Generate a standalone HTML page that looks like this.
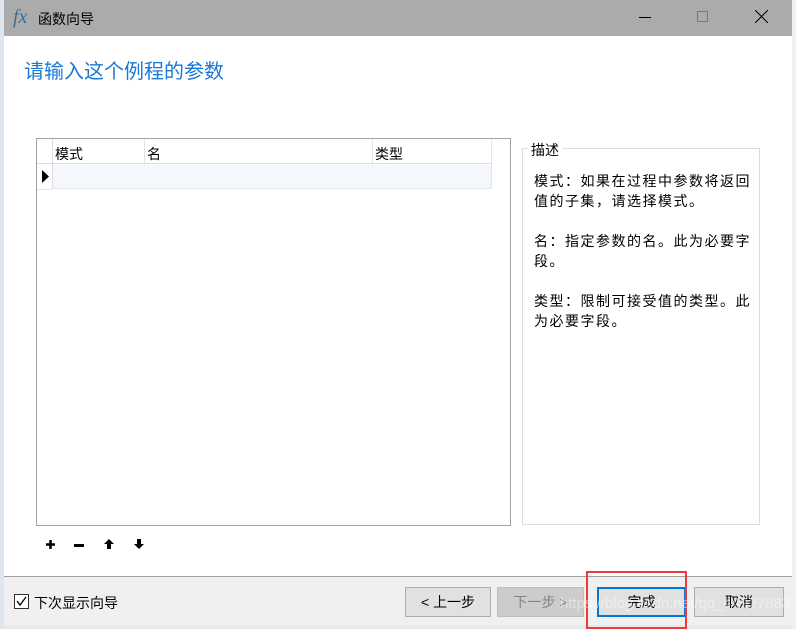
<!DOCTYPE html>
<html><head><meta charset="utf-8"><style>
*{margin:0;padding:0;box-sizing:border-box}
body{width:796px;height:629px;position:relative;background:#fff;font-family:"Liberation Sans","Noto Sans CJK SC",sans-serif;font-size:14px;color:#000;overflow:hidden}
.a{position:absolute}
.btn{position:absolute;top:587px;height:30px;border:1px solid #adadad;background:#e1e1e1;text-align:center;line-height:28px;font-size:14px}
</style></head><body>
<div class="a" style="left:0;top:0;width:4px;height:629px;background:#dfe6ee"></div>
<div class="a" style="left:792px;top:0;width:4px;height:629px;background:#eef0f3"></div>
<div class="a" style="left:4px;top:0;width:788px;height:36px;background:#ababab"></div>
<div class="a" style="left:13px;top:6px;font-family:'Liberation Serif',serif;font-style:italic;font-size:20px;color:#3d6e94">fx</div>
<div class="a" style="left:38px;top:9px;font-size:14px">函数向导</div>
<div class="a" style="left:639px;top:17px;width:12px;height:1px;background:#000"></div>
<div class="a" style="left:697px;top:11px;width:11px;height:11px;border:1px solid #777"></div>
<svg class="a" style="left:755px;top:10px" width="13" height="13"><path d="M0 0L13 13M13 0L0 13" stroke="#000" stroke-width="1"/></svg>
<div class="a" style="left:24px;top:55px;font-size:20px;color:#1a78d6">请输入这个例程的参数</div>
<div class="a" style="left:36px;top:138px;width:475px;height:388px;border:1px solid #a0a0a0;background:#fff"></div>
<div class="a" style="left:37px;top:139px;width:455px;height:25px;border-bottom:1px solid #ddd"></div>
<div class="a" style="left:52px;top:139px;width:1px;height:50px;background:#ddd"></div>
<div class="a" style="left:144px;top:139px;width:1px;height:50px;background:#e5e5e5"></div>
<div class="a" style="left:372px;top:139px;width:1px;height:50px;background:#e5e5e5"></div>
<div class="a" style="left:491px;top:139px;width:1px;height:50px;background:#e5e5e5"></div>
<div class="a" style="left:53px;top:165px;width:438px;height:24px;background:#f4f8fc;border-bottom:1px solid #e5e5e5"></div>
<div class="a" style="left:37px;top:189px;width:15px;height:1px;background:#e5e5e5"></div>
<div class="a" style="left:55px;top:144px">模式</div>
<div class="a" style="left:147px;top:144px">名</div>
<div class="a" style="left:375px;top:144px">类型</div>
<svg class="a" style="left:42px;top:170px" width="8" height="13"><path d="M0 0L7 6.5L0 13Z" fill="#000"/></svg>
<div class="a" style="left:522px;top:148px;width:238px;height:377px;border:1px solid #dcdcdc"></div>
<div class="a" style="left:528px;top:140px;background:#fff;padding:0 3px">描述</div>
<div class="a" style="left:534px;top:171px;width:230px;line-height:20px;font-size:14px;letter-spacing:1.5px">模式：如果在过程中参数将返回值的子集，请选择模式。<br><br>名：指定参数的名。此为必要字段。<br><br>类型：限制可接受值的类型。此为必要字段。</div>
<svg class="a" style="left:45px;top:539px" width="11" height="11"><path d="M5.5 1V10M1 5.5H10" stroke="#000" stroke-width="2.5"/></svg>
<div class="a" style="left:74px;top:544px;width:10px;height:3px;background:#000"></div>
<svg class="a" style="left:103px;top:538px" width="12" height="12"><path d="M6 1L1 6H4V11H8V6H11Z" fill="#000"/></svg>
<svg class="a" style="left:133px;top:538px" width="12" height="12"><path d="M6 11L1 6H4V1H8V6H11Z" fill="#000"/></svg>
<div class="a" style="left:4px;top:576px;width:788px;height:49px;background:#f0f0f0;border-top:1px solid #a0a0a0"></div>
<div class="a" style="left:4px;top:625px;width:788px;height:4px;background:#e8e8e8"></div>
<div class="a" style="left:14px;top:594px;width:15px;height:15px;border:1px solid #333;background:#fff"></div>
<svg class="a" style="left:16px;top:596px" width="11" height="11"><path d="M1 5L4 9L10 1" stroke="#000" stroke-width="1.3" fill="none"/></svg>
<div class="a" style="left:34px;top:593px">下次显示向导</div>
<div class="btn" style="left:405px;width:86px">&lt; 上一步</div>
<div class="btn" style="left:497px;width:87px;background:#ccc;border-color:#bfbfbf;color:#838383">下一步 &gt;</div>
<div class="btn" style="left:597px;width:89px;border:2px solid #0078d7;line-height:26px">完成</div>
<div class="btn" style="left:694px;width:90px">取消</div>
<div class="a" style="left:586px;top:571px;width:101px;height:58px;border:2px solid #f03a3a"></div>
<div class="a" style="left:560px;top:595px;color:rgba(255,255,255,.45);font-size:15px;white-space:nowrap">https://blog.csdn.net/qq_44927883</div>
</body></html>
